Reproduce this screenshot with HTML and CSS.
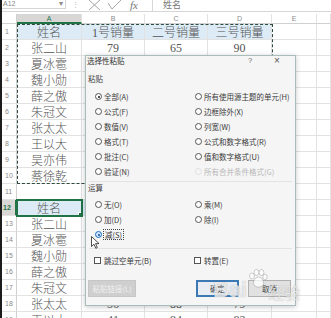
FILE: index.html
```html
<!DOCTYPE html>
<html lang="zh">
<head>
<meta charset="utf-8">
<link rel="stylesheet" href="styles.css">
</head>
<body>
<div class="app">
  <div class="fbar">
    <div class="namebox"><span>A12</span><span class="dd">▾</span></div>
    <div class="dots">⋮</div>
    <div class="fbtns">
      <svg width="13" height="10" viewBox="0 0 13 10"><path d="M1 0 L12 10 M12 0 L1 10" stroke="#a8a8a8" stroke-width="1" fill="none"/></svg>
      <svg width="15" height="10" viewBox="0 0 15 10"><path d="M1 3 L5 9 L14 0" stroke="#a8a8a8" stroke-width="1" fill="none"/></svg>
      <span class="fx">fx</span>
    </div>
    <div class="finput">姓名</div>
  </div>

  <div class="sheet">
    <div class="corner"></div><div class="ch sel">A</div><div class="ch">B</div><div class="ch">C</div><div class="ch">D</div><div class="ch">E</div><div class="ch"></div>

    <div class="rh">1</div><div class="c nm hd">姓名</div><div class="c nm hd"><span class="n">1</span>号销量</div><div class="c nm hd">二号销量</div><div class="c nm hd">三号销量</div><div class="c"></div><div class="c"></div>
    <div class="rh">2</div><div class="c nm">张二山</div><div class="c n">79</div><div class="c n">65</div><div class="c n">90</div><div class="c"></div><div class="c"></div>
    <div class="rh">3</div><div class="c nm">夏冰雹</div><div class="c"></div><div class="c"></div><div class="c"></div><div class="c"></div><div class="c"></div>
    <div class="rh">4</div><div class="c nm">魏小勋</div><div class="c"></div><div class="c"></div><div class="c"></div><div class="c"></div><div class="c"></div>
    <div class="rh">5</div><div class="c nm">薛之傲</div><div class="c"></div><div class="c"></div><div class="c"></div><div class="c"></div><div class="c"></div>
    <div class="rh">6</div><div class="c nm">朱冠文</div><div class="c"></div><div class="c"></div><div class="c"></div><div class="c"></div><div class="c"></div>
    <div class="rh">7</div><div class="c nm">张太太</div><div class="c"></div><div class="c"></div><div class="c"></div><div class="c"></div><div class="c"></div>
    <div class="rh">8</div><div class="c nm">王以大</div><div class="c"></div><div class="c"></div><div class="c"></div><div class="c"></div><div class="c"></div>
    <div class="rh">9</div><div class="c nm">吴亦伟</div><div class="c"></div><div class="c"></div><div class="c"></div><div class="c"></div><div class="c"></div>
    <div class="rh">10</div><div class="c nm">蔡徐乾</div><div class="c"></div><div class="c"></div><div class="c"></div><div class="c"></div><div class="c"></div>
    <div class="rh">11</div><div class="c"></div><div class="c"></div><div class="c"></div><div class="c"></div><div class="c"></div><div class="c"></div>
    <div class="rh sel">12</div><div class="c nm hd active">姓名</div><div class="c hd"></div><div class="c hd"></div><div class="c hd"></div><div class="c"></div><div class="c"></div>
    <div class="rh">13</div><div class="c nm">张二山</div><div class="c"></div><div class="c"></div><div class="c"></div><div class="c"></div><div class="c"></div>
    <div class="rh">14</div><div class="c nm">夏冰雹</div><div class="c"></div><div class="c"></div><div class="c"></div><div class="c"></div><div class="c"></div>
    <div class="rh">15</div><div class="c nm">魏小勋</div><div class="c"></div><div class="c"></div><div class="c"></div><div class="c"></div><div class="c"></div>
    <div class="rh">16</div><div class="c nm">薛之傲</div><div class="c"></div><div class="c"></div><div class="c"></div><div class="c"></div><div class="c"></div>
    <div class="rh">17</div><div class="c nm">朱冠文</div><div class="c"></div><div class="c"></div><div class="c"></div><div class="c"></div><div class="c"></div>
    <div class="rh">18</div><div class="c nm">张太太</div><div class="c n">56</div><div class="c n">88</div><div class="c n">79</div><div class="c"></div><div class="c"></div>
    <div class="rh">19</div><div class="c nm">王以大</div><div class="c n">41</div><div class="c n">84</div><div class="c n">82</div><div class="c"></div><div class="c"></div>

    <div class="ants"></div>

    <div class="dialog">
      <div class="dtitle"><span class="tt">选择性粘贴</span><span class="q">?</span><span class="xx">×</span></div>
      <div class="grp">粘贴</div>
      <div class="opts paste">
        <div class="opt"><i class="rb on"></i>全部(A)</div>
        <div class="opt"><i class="rb"></i>所有使用源主题的单元(H)</div>
        <div class="opt"><i class="rb"></i>公式(F)</div>
        <div class="opt"><i class="rb"></i>边框除外(X)</div>
        <div class="opt"><i class="rb"></i>数值(V)</div>
        <div class="opt"><i class="rb"></i>列宽(W)</div>
        <div class="opt"><i class="rb"></i>格式(T)</div>
        <div class="opt"><i class="rb"></i>公式和数字格式(R)</div>
        <div class="opt"><i class="rb"></i>批注(C)</div>
        <div class="opt"><i class="rb"></i>值和数字格式(U)</div>
        <div class="opt"><i class="rb"></i>验证(N)</div>
        <div class="opt dis"><i class="rb"></i>所有合并条件格式(G)</div>
      </div>
      <div class="hr"></div>
      <div class="grp g2">运算</div>
      <div class="opts ops">
        <div class="opt"><i class="rb"></i>无(O)</div>
        <div class="opt"><i class="rb"></i>乘(M)</div>
        <div class="opt"><i class="rb"></i>加(D)</div>
        <div class="opt"><i class="rb"></i>除(I)</div>
        <div class="opt"><i class="rb hot"></i><span class="focus">减(S)</span>
          <svg class="cursor" width="9" height="13" viewBox="0 0 9 13"><path d="M0.5 0.5 L0.5 10.5 L3 8.2 L4.8 12.3 L6.3 11.6 L4.6 7.6 L8 7.6 Z" fill="#fff" stroke="#222" stroke-width="0.8"/></svg>
        </div>
        <div class="opt"></div>
      </div>
      <div class="hr h2"></div>
      <div class="opts chk">
        <div class="opt"><i class="cb"></i>跳过空单元(B)</div>
        <div class="opt"><i class="cb"></i>转置(E)</div>
      </div>
      <div class="btns">
        <div class="btn off">粘贴链接(L)</div>
        <div class="btn ok">确定</div>
        <div class="btn">取消</div>
      </div>
    </div>

    <div class="wm"><span class="bai">Bai</span><svg width="20" height="19" viewBox="0 0 20 19"><g fill="rgba(255,255,255,0.75)" stroke="rgba(120,120,120,0.45)" stroke-width="0.8"><ellipse cx="4" cy="7" rx="2.4" ry="3"/><ellipse cx="8.5" cy="3.5" rx="2.4" ry="3"/><ellipse cx="13.5" cy="3.5" rx="2.4" ry="3"/><ellipse cx="17" cy="8" rx="2.2" ry="2.8"/><path d="M10.5 8 C6 8 4 15 7 17 C9 18.5 12 18.5 14.5 17 C17 15 15 8 10.5 8 Z"/></g></svg><span class="jy">经验</span></div>
  </div>
</div>
</body>
</html>
```

FILE: styles.css
```css
* { box-sizing: border-box; margin: 0; padding: 0; }
html, body { margin: 0; background: #fff; }
body {
  width: 331px;
  height: 318px;
  overflow: hidden;
  font-family: "Noto Sans CJK SC", "Liberation Sans", sans-serif;
}
.app {
  height: 318px;
  border-left: 2px solid #1c1c1c;
  position: relative;
}

/* formula bar */
.fbar {
  height: 12px;
  display: flex;
  border-bottom: 1px solid #d6d6d6;
  font-family: "Liberation Sans", sans-serif;
  font-size: 7px;
  color: #8a8a8a;
}
.namebox {
  width: 64px;
  display: flex;
  justify-content: space-between;
  padding: 0 2px 0 1px;
  line-height: 7px;
  border-right: 1px solid #d6d6d6;
  border-bottom: 1px solid #d6d6d6;
  height: 9px;
}
.dd { font-size: 8px; }
.dots { width: 18px; text-align: center; line-height: 9px; color: #b0b0b0; }
.fbtns {
  width: 68px;
  display: flex;
  align-items: flex-start;
  gap: 6px;
  padding-left: 4px;
}
.fx {
  font-family: "Liberation Serif", serif;
  font-style: italic;
  font-size: 11px;
  line-height: 10px;
  color: #777;
  margin-left: 2px;
}
.finput {
  flex: 1;
  border-left: 1px solid #d6d6d6;
  padding-left: 10px;
  font-family: "Noto Sans CJK SC", sans-serif;
  font-size: 9px;
  line-height: 10px;
  color: #777;
}

/* sheet */
.sheet {
  position: relative;
  margin-top: 2px;
  display: grid;
  grid-template-columns: 15px 65px 63px 63px 64px 45px 1fr;
  grid-template-rows: 10px repeat(19, 16px);
}
.corner { border-right: 1px solid #d0d0d0; border-bottom: 1px solid #d0d0d0; }
.ch {
  font-family: "Liberation Sans", sans-serif;
  font-size: 7px;
  line-height: 9px;
  text-align: center;
  color: #8a8a8a;
  border-right: 1px solid #e2e2e2;
  border-bottom: 1px solid #d0d0d0;
}
.ch.sel {
  background: #d9d6d6;
  color: #217346;
  border-bottom: 2px solid #217346;
}
.rh {
  font-family: "Liberation Sans", sans-serif;
  font-size: 7px;
  line-height: 16px;
  padding-left: 3px;
  color: #8a8a8a;
  border-right: 1px solid #d0d0d0;
  border-bottom: 1px solid #e2e2e2;
}
.rh.sel {
  background: #d9d6d6;
  color: #217346;
  font-weight: bold;
  border-right: 2px solid #217346;
  padding-left: 1px;
}
.c {
  border-right: 1px solid #e2e2e2;
  border-bottom: 1px solid #e2e2e2;
  text-align: center;
  line-height: 16px;
  overflow: hidden;
  white-space: nowrap;
  color: #555;
}
.nm {
  font-family: "Noto Sans CJK SC", sans-serif;
  font-size: 12px;
  font-weight: 300;
}
.n {
  font-family: "Liberation Serif", serif;
  font-size: 12px;
}
.hd { background: #dcebf6; }
.active {
  position: relative;
  outline: 2px solid #217346;
  outline-offset: -1px;
}
.active::after {
  content: "";
  position: absolute;
  right: -3px;
  bottom: -3px;
  width: 4px;
  height: 4px;
  background: #217346;
  border: 1px solid #fff;
}
.ants {
  position: absolute;
  left: 15px;
  top: 10px;
  width: 256px;
  height: 160px;
  border: 1px dashed #2e4a3c;
  pointer-events: none;
}

/* dialog */
.dialog {
  position: absolute;
  left: 83px;
  top: 41px;
  width: 211px;
  height: 251px;
  background: #f5f5f5;
  border: 1px solid #a9bcbc;
  box-shadow: 0 1px 5px rgba(0, 0, 0, 0.22);
  font-size: 7.5px;
  color: #3a3a3a;
  display: flex;
  flex-direction: column;
}
.dtitle {
  height: 10px;
  display: flex;
  align-items: center;
  padding-left: 1px;
  line-height: 10px;
  color: #333;
}
.tt { flex: 1; }
.q { width: 10px; text-align: center; margin-right: 17px; font-family: "Liberation Sans", sans-serif; color: #666; }
.xx { width: 10px; text-align: center; margin-right: 13px; font-family: "Liberation Sans", sans-serif; font-size: 10px; color: #555; }
.grp {
  margin-top: 7px;
  height: 12px;
  line-height: 12px;
  padding-left: 2px;
  color: #444;
}
.g2 { margin-top: 0; }
.opts {
  display: grid;
  grid-template-columns: 100px 1fr;
  grid-auto-rows: 15px;
  padding-left: 9px;
}
.paste { margin-top: 4px; }
.ops { margin-top: 3px; }
.opt {
  display: flex;
  align-items: center;
  white-space: nowrap;
  position: relative;
}
.opt.dis { color: #b8b8b8; }
.rb {
  width: 7px;
  height: 7px;
  border: 1px solid #555;
  border-radius: 50%;
  background: #fff;
  margin-right: 2px;
  position: relative;
  flex: none;
}
.dis .rb { border-color: #e0e0e0; background: transparent; }
.rb.on::after, .rb.hot::after {
  content: "";
  position: absolute;
  left: 1.5px;
  top: 1.5px;
  width: 2px;
  height: 2px;
  border-radius: 50%;
  background: #111;
}
.rb.hot { border-color: #1a6fc4; background: #cfe6fb; }
.rb.hot::after { background: #124a8a; }
.focus { outline: 1px dotted #444; outline-offset: 0; padding: 0 1px; line-height: 9px; }
.cursor { position: absolute; left: -4px; top: 9px; }
.hr { height: 1px; background: #e3e3e3; margin: 2px 3px 0; }
.h2 { margin-top: 6px; }
.chk { margin-top: 4px; padding-left: 8px; }
.cb {
  width: 7px;
  height: 7px;
  border: 1px solid #555;
  background: #fff;
  margin-right: 3px;
  flex: none;
}
.btns {
  margin-top: 12px;
  display: flex;
  padding: 0 4px 0 2px;
  height: 17px;
}
.btn {
  width: 43px;
  height: 17px;
  line-height: 15px;
  text-align: center;
  background: #e1e1e1;
  border: 1px solid #b0b0b0;
  color: #444;
}
.btn.off {
  width: 48px;
  background: #cfcfcf;
  border-color: #c6c6c6;
  color: #efefef;
  margin-right: auto;
}
.btn.ok {
  margin-right: 9px;
  background: #e7edf3;
  border: 2px solid #3b78b4;
  line-height: 13px;
}

/* watermark */
.wm {
  position: absolute;
  left: 211px;
  top: 252px;
  display: flex;
  align-items: flex-start;
  pointer-events: none;
}
.bai {
  font-family: "Liberation Sans", sans-serif;
  font-weight: bold;
  font-size: 22px;
  line-height: 24px;
  margin-top: 12px;
  color: rgba(255, 255, 255, 0.72);
  text-shadow: 0 0 1px rgba(90, 90, 90, 0.5);
}
.wm svg { margin-top: 3px; margin-left: 1px; }
.jy {
  font-size: 16px;
  line-height: 20px;
  margin-top: 16px;
  color: rgba(255, 255, 255, 0.72);
  text-shadow: 0 0 1px rgba(90, 90, 90, 0.5);
}
```
